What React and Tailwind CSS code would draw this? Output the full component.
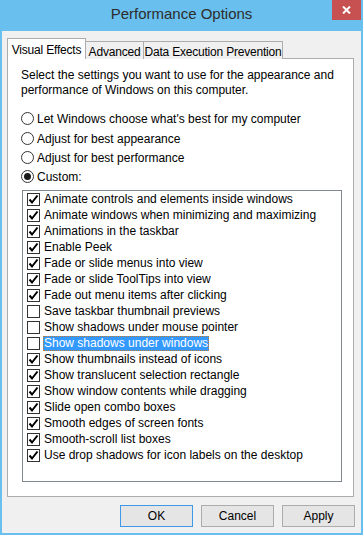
import React from 'react';

const effects = [
  { label: "Animate controls and elements inside windows", on: true },
  { label: "Animate windows when minimizing and maximizing", on: true },
  { label: "Animations in the taskbar", on: true },
  { label: "Enable Peek", on: true },
  { label: "Fade or slide menus into view", on: true },
  { label: "Fade or slide ToolTips into view", on: true },
  { label: "Fade out menu items after clicking", on: true },
  { label: "Save taskbar thumbnail previews", on: false },
  { label: "Show shadows under mouse pointer", on: false },
  { label: "Show shadows under windows", on: false, selected: true },
  { label: "Show thumbnails instead of icons", on: true },
  { label: "Show translucent selection rectangle", on: true },
  { label: "Show window contents while dragging", on: true },
  { label: "Slide open combo boxes", on: true },
  { label: "Smooth edges of screen fonts", on: true },
  { label: "Smooth-scroll list boxes", on: true },
  { label: "Use drop shadows for icon labels on the desktop", on: true },
];

const radios = [
  "Let Windows choose what's best for my computer",
  "Adjust for best appearance",
  "Adjust for best performance",
  "Custom:",
];

const Check = ({ on }) => (
  <div className="w-[13px] h-[13px] border border-[#333333] bg-white flex items-center justify-center shrink-0">
    {on && (
      <svg width="11" height="11" viewBox="0 0 11 11">
        <path d="M1.5 5.5 L4 8.5 L9.5 1.5" fill="none" stroke="#000" strokeWidth="2" />
      </svg>
    )}
  </div>
);

const Radio = ({ on }) => (
  <div className="w-[13px] h-[13px] rounded-full border border-[#333333] bg-white flex items-center justify-center shrink-0">
    {on && <div className="w-[7px] h-[7px] rounded-full bg-[#1a1a1a]" />}
  </div>
);

export default function App() {
  return (
    <div className="w-[363px] h-[535px] bg-[#69bfee] flex flex-col text-[12px] text-black" style={{ fontFamily: '"Liberation Sans", Arial, sans-serif' }}>
      <div className="h-[31px] relative flex items-center justify-center shrink-0">
        <span className="text-[15px] text-[#2d2d2d] pb-[2px]">Performance Options</span>
        <div className="absolute right-[2px] top-0 w-[29px] h-[20px] bg-[#c75050] flex items-center justify-center">
          <svg width="9" height="8" viewBox="0 0 9 8">
            <path d="M1 0.5 L8 7.5 M8 0.5 L1 7.5" stroke="#fff" strokeWidth="2" />
          </svg>
        </div>
      </div>

      <div className="flex-1 mx-[2px] mb-[2px] bg-[#f0f0f0] flex flex-col pl-[5px] pr-[7px] pt-[7px]">
        <div className="flex items-end h-[21px] relative z-10 whitespace-nowrap tracking-[-0.2px]">
          <div className="h-[21px] w-[79px] bg-white border border-b-0 border-[#acacac] flex justify-center pt-[2px]">Visual Effects</div>
          <div className="h-[18px] w-[58px] bg-[#f0f0f0] border border-l-0 border-b-0 border-[#acacac] flex justify-center pt-[1px]">Advanced</div>
          <div className="h-[18px] w-[139px] bg-[#f0f0f0] border border-l-0 border-b-0 border-[#acacac] flex justify-center pt-[1px]">Data Execution Prevention</div>
        </div>
        <div className="h-[439px] -mt-px bg-white border border-[#acacac] pt-[9px] pl-[13px] pr-[11px] flex flex-col">
          <p className="leading-[15px]">Select the settings you want to use for the appearance and performance of Windows on this computer.</p>
          <div className="mt-[11px] flex flex-col">
            {radios.map((r, i) => (
              <div key={r} className={`h-[19px] flex items-center gap-[3px] ${i === 1 ? "mt-px" : ""}`}>
                <Radio on={i === 3} />
                <span>{r}</span>
              </div>
            ))}
          </div>
          <div className="mt-[4px] ml-[1px] h-[292px] border border-[#828790] bg-white pl-[4px]">
            {effects.map((e) => (
              <div key={e.label} className="h-[16px] flex items-center gap-[3px]">
                <Check on={e.on} />
                <span className={e.selected ? "bg-[#3399ff] text-white outline-1 outline-dotted outline-[#c47a2a] -outline-offset-1 px-px leading-[15px]" : "px-px"}>{e.label}</span>
              </div>
            ))}
          </div>
        </div>
        <div className="flex justify-end gap-[8px] mt-[8px] mr-[-1px]">
          <button className="w-[73px] h-[22px] border border-[#3c9ae8] bg-[#e5e5e5]">OK</button>
          <button className="w-[73px] h-[22px] border border-[#acacac] bg-[#e5e5e5]">Cancel</button>
          <button className="w-[73px] h-[22px] border border-[#acacac] bg-[#e5e5e5]">Apply</button>
        </div>
      </div>
    </div>
  );
}
